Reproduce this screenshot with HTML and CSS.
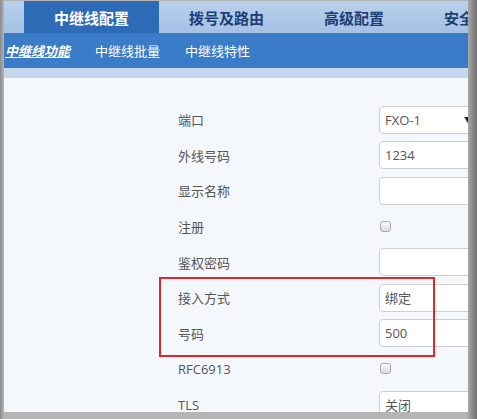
FILE: index.html
```html
<!DOCTYPE html>
<html lang="zh">
<head>
  <meta charset="UTF-8">
  <title>中继线配置</title>
  <link rel="stylesheet" href="styles.css">
</head>
<body>
  <div class="frame">
    <!-- Onglets principaux -->
    <div class="tabs">
      <span class="tab active">中继线配置</span>
      <span class="tab">拨号及路由</span>
      <span class="tab">高级配置</span>
      <span class="tab">安全</span>
    </div>
    <div class="subnav">
      <a class="current">中继线功能</a>
      <a>中继线批量</a>
      <a>中继线特性</a>
    </div>
    <div class="strip"></div>
    <!-- Formulaire -->
    <div class="content">
      <div class="row"><label>端口</label><div class="select">FXO-1<span class="arrow">▼</span></div></div>
      <div class="row"><label>外线号码</label><div class="input">1234</div></div>
      <div class="row"><label>显示名称</label><div class="input"></div></div>
      <div class="row"><label>注册</label><span class="check"></span></div>
      <div class="row"><label>鉴权密码</label><div class="input"></div></div>
      <div class="marked">
        <div class="row"><label>接入方式</label><div class="input">绑定</div></div>
        <div class="row"><label>号码</label><div class="input">500</div></div>
      </div>
      <div class="row"><label>RFC6913</label><span class="check"></span></div>
      <div class="row"><label>TLS</label><div class="input">关闭</div></div>
    </div>
  </div>
</body>
</html>
```
FILE: styles.css
```css
* {
  box-sizing: border-box;
  margin: 0;
  padding: 0;
}
body {
  width: 477px;
  height: 419px;
  overflow: hidden;
  background: linear-gradient(90deg, #8a8a8a, #b5b5b5 4px, #b5b5b5 466px, #6f6f6f);
  font-family: "Open Sans", "Noto Sans CJK SC", sans-serif;
}
/* Cadre principal */
.frame {
  margin: 1px 9px 0 4px;
  height: 411px;
  overflow: hidden;
  background-color: #f4f8fc;
  display: flex;
  flex-direction: column;
}
.tabs {
  height: 32px;
  flex-shrink: 0;
  background: linear-gradient(#b9d0ec, #a5c0e4);
  display: flex;
  align-items: stretch;
  padding-left: 20px;
}
.tab {
  flex-shrink: 0;
  padding: 0 30px;
  display: flex;
  align-items: center;
  font-size: 15px;
  font-weight: bold;
  color: #1c3f78;
  font-family: "Noto Sans CJK SC", sans-serif;
}
.tab.active {
  background-color: #2d6bb6;
  color: #fff;
}
.subnav {
  height: 35px;
  flex-shrink: 0;
  background-color: #3a7cc7;
  display: flex;
  align-items: center;
  padding-left: 1px;
}
.subnav a {
  color: #fff;
  font-size: 13px;
  width: 90px;
  font-family: "Noto Sans CJK SC", sans-serif;
}
.subnav a.current {
  font-style: italic;
  font-weight: bold;
  text-decoration: underline;
}
.strip {
  height: 10px;
  flex-shrink: 0;
  background-color: #c6d8ef;
}
.content {
  padding-top: 24px;
  padding-left: 174px;
}
.row {
  height: 35.6px;
  display: flex;
  align-items: center;
}
.row label {
  width: 201px;
  flex-shrink: 0;
  font-size: 13px;
  color: #555;
}
.input, .select {
  width: 100px;
  height: 28px;
  flex-shrink: 0;
  background-color: #fff;
  border: 1px solid #cfcfcf;
  border-radius: 4px;
  padding-left: 5px;
  font-size: 13px;
  color: #555;
  display: flex;
  align-items: center;
}
.select {
  position: relative;
}
.arrow {
  position: absolute;
  left: 84px;
  font-size: 8px;
  color: #222;
}
.check {
  width: 11px;
  height: 11px;
  margin-left: 1px;
  border: 1px solid #aaa;
  border-radius: 3px;
  background: linear-gradient(#fafafa, #dcdcdc);
}
/* Encadré rouge */
.marked {
  position: relative;
}
.marked::after {
  content: "";
  position: absolute;
  left: -19px;
  top: -3px;
  width: 272px;
  height: 76px;
  border: 2px solid #e2262a;
}
```
